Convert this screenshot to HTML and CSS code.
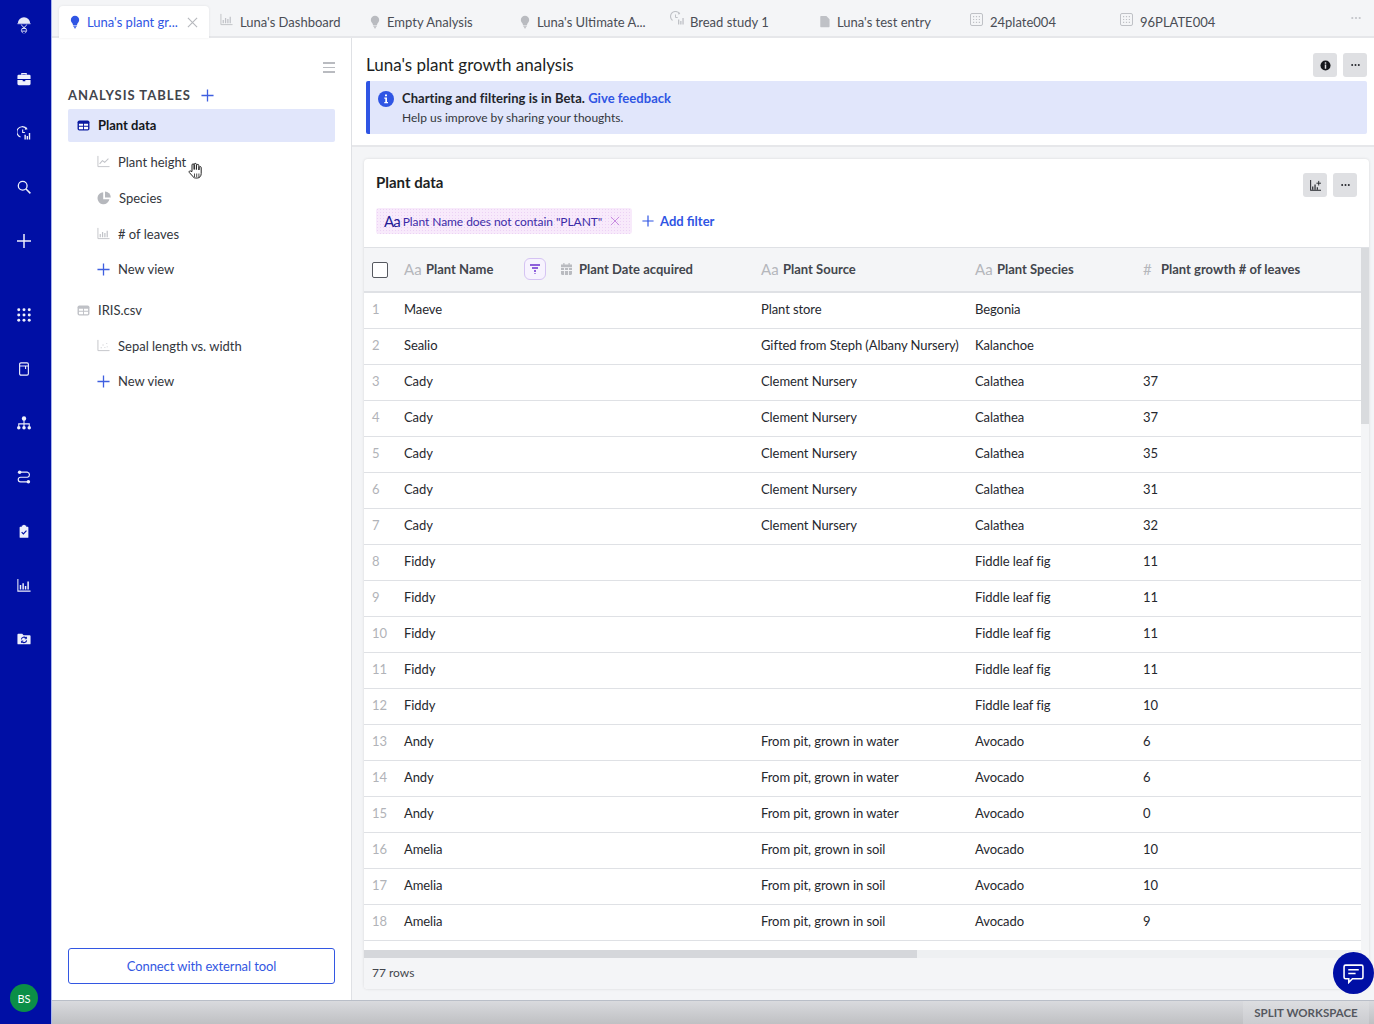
FILE: index.html
```html
<!DOCTYPE html>
<html lang="en">
<head>
<meta charset="utf-8">
<title>Luna's plant growth analysis</title>
<link rel="stylesheet" href="styles.css">
</head>
<body>
<svg class="defs" width="0" height="0" aria-hidden="true">
  <symbol id="bulb" viewBox="0 0 12 16"><path d="M6 0.500a5 5 0 0 0-5 5c0 2 1.200 3 2 4.400.4.700.5 1.300.5 1.900h5c0-.6.100-1.200.5-1.900.8-1.400 2-2.400 2-4.400a5 5 0 0 0-5-5z" fill="currentColor"/><path d="M4 12.400h4v1.200h-4zM4.800 14.400h2.400v1.200h-2.400z" fill="currentColor"/></symbol>
  <symbol id="bars" viewBox="0 0 14 14"><path d="M1 1v11.500h12.500" fill="none" stroke="currentColor" stroke-width="1"/><path d="M3.500 7.500v3.500M6 5.500v5.500M8.500 6.500v4.500M11 4v7" fill="none" stroke="currentColor" stroke-width="1.300"/></symbol>
  <symbol id="line" viewBox="0 0 14 14"><path d="M1 1v11.500h12.500" fill="none" stroke="currentColor" stroke-width="1"/><path d="M2.800 9.500l3-3.500 2.500 1.800 4-4" fill="none" stroke="currentColor" stroke-width="1.100"/></symbol>
  <symbol id="scatter" viewBox="0 0 14 14"><path d="M1 1v11.500h12.500" fill="none" stroke="currentColor" stroke-width="1"/><path d="M4 9h1v1h-1zM6 6h1v1h-1zM8 8.500h1v1h-1zM10 4.500h1v1h-1zM10.500 8h1v1h-1z" fill="currentColor"/></symbol>
  <symbol id="pie" viewBox="0 0 14 14"><path d="M6.200 1.200a6 6 0 1 0 6.200 7h-6.200z" fill="currentColor"/><path d="M8 .6v5.800h5.800A6 6 0 0 0 8 .6z" fill="currentColor"/></symbol>
  <symbol id="table" viewBox="0 0 14 12"><rect x="0.500" y="0.500" width="13" height="11" rx="2" fill="currentColor"/><path d="M2 4.200h4.500v2h-4.500zM7.500 4.200h4.500v2h-4.500zM2 7.300h4.500v2.800h-4.500zM7.500 7.300h4.500v2.800h-4.500z" fill="#fff"/></symbol>
  <symbol id="plus" viewBox="0 0 14 14"><path d="M7 .5v13M.5 7h13" fill="none" stroke="currentColor" stroke-width="1.400"/></symbol>
  <symbol id="close" viewBox="0 0 12 12"><path d="M1 1l10 10M11 1L1 11" fill="none" stroke="currentColor" stroke-width="1.200"/></symbol>
  <symbol id="dots" viewBox="0 0 10 4"><circle cx="1.300" cy="2" r="1.100" fill="currentColor"/><circle cx="5" cy="2" r="1.100" fill="currentColor"/><circle cx="8.700" cy="2" r="1.100" fill="currentColor"/></symbol>
  <symbol id="plate" viewBox="0 0 13 13"><rect x="0.500" y="0.500" width="12" height="12" rx="1.500" fill="none" stroke="currentColor"/><path d="M3 3h1.200v1.200H3zM5.900 3h1.200v1.200H5.900zM8.800 3H10v1.200H8.800zM3 5.900h1.200v1.200H3zM5.900 5.900h1.200v1.200H5.900zM8.800 5.900H10v1.200H8.800zM3 8.800h1.200V10H3zM5.900 8.800h1.200V10H5.900zM8.800 8.800H10V10H8.800z" fill="currentColor"/></symbol>
  <symbol id="doc" viewBox="0 0 11 13"><path d="M1 .5h6l3.500 3.500v8a.7.700 0 0 1-.7.700H1a.7.700 0 0 1-.7-.7V1.200A.7.700 0 0 1 1 .5z" fill="currentColor"/></symbol>
  <symbol id="study" viewBox="0 0 14 14"><path d="M9.500 2.500A5 5 0 1 0 2.500 9.500" fill="none" stroke="currentColor" stroke-width="1.100"/><path d="M5.500 3.500v3h2.200" fill="none" stroke="currentColor"/><path d="M8.800.8l1.500 2.200-2.400.6zM8 8.500h1.300v5H8zM10.200 10h1.300v3.500h-1.300zM12.400 7h1.300v6.500h-1.300z" fill="currentColor"/></symbol>
  <symbol id="cal" viewBox="0 0 12 13"><path d="M2.500 0h1.300v1.500h4.400V0h1.300v1.500H12v3H0v-3h2.500zM0 5.500h3.300v2.200H0zM4.300 5.500h3.400v2.200H4.300zM8.700 5.500H12v2.200H8.700zM0 8.700h3.300V13H1.200A1.200 1.200 0 0 1 0 11.800zM4.300 8.700h3.400V13H4.300zM8.700 8.700H12v3.100a1.200 1.200 0 0 1-1.200 1.200H8.700z" fill="currentColor"/></symbol>
</svg>

<div class="app">
  <nav class="rail">
    <div class="rail-group">
      <svg class="rail-icon logo" viewBox="0 0 16 20"><path d="M1 8a7 7 0 0 1 14 0z" fill="#e6e8f8"/><path d="M0.500 8.500h15" stroke="#e6e8f8" stroke-width="1"/><path d="M5 9.500c0 3 6 3.500 6 6.500 0 1.400-1 2.500-2 3.500M11 9.500c0 3-6 3.500-6 6.500 0 1.400 1 2.500 2 3.500M5.500 14h5M5.500 17h5" fill="none" stroke="#e6e8f8" stroke-width="1"/></svg>
      <svg class="rail-icon" viewBox="0 0 16 16"><path d="M5.500 3V1.800h5V3" fill="none" stroke="#eef0fb" stroke-width="1.400"/><path d="M.5 4.500a1.500 1.500 0 0 1 1.500-1.500h12a1.500 1.500 0 0 1 1.500 1.500V8h-15zM.5 9h6v1.500h3V9h6v4.500a1.500 1.500 0 0 1-1.500 1.500H2a1.500 1.500 0 0 1-1.500-1.500z" fill="#eef0fb"/></svg>
      <svg class="rail-icon" viewBox="0 0 16 16"><path d="M10.500 3A6 6 0 1 0 4 12.500" fill="none" stroke="#eef0fb" stroke-width="1.300"/><path d="M6.500 4v3.500h2.500" fill="none" stroke="#eef0fb" stroke-width="1.200"/><path d="M10 .6l2.200 3-3.300.7zM8.500 10h1.600v5.500H8.500zM11 11.500h1.600v4H11zM13.500 8h1.600v7.500h-1.600z" fill="#eef0fb"/></svg>
      <svg class="rail-icon" viewBox="0 0 16 16"><circle cx="6.500" cy="6.500" r="5" fill="none" stroke="#eef0fb" stroke-width="1.500"/><path d="M10.300 10.300l5 5" stroke="#eef0fb" stroke-width="1.700"/></svg>
      <svg class="rail-icon" viewBox="0 0 14 14"><path d="M7 0v14M0 7h14" stroke="#eef0fb" stroke-width="1.500"/></svg>
    </div>
    <div class="rail-group rail-tools">
      <svg class="rail-icon" viewBox="0 0 16 16"><g fill="#eef0fb"><circle cx="2" cy="2" r="1.700"/><circle cx="8" cy="2" r="1.700"/><circle cx="14" cy="2" r="1.700"/><circle cx="2" cy="8" r="1.700"/><circle cx="8" cy="8" r="1.700"/><circle cx="14" cy="8" r="1.700"/><circle cx="2" cy="14" r="1.700"/><circle cx="8" cy="14" r="1.700"/><circle cx="14" cy="14" r="1.700"/></g></svg>
      <svg class="rail-icon" viewBox="0 0 16 16"><rect x="3" y="1" width="10" height="14" rx="1.500" fill="none" stroke="#eef0fb" stroke-width="1.300"/><path d="M3 4.500h10M9.800 4.500v3.500" stroke="#eef0fb" stroke-width="1.200"/></svg>
      <svg class="rail-icon" viewBox="0 0 16 16"><g fill="#eef0fb"><circle cx="8" cy="2.800" r="2.500"/><circle cx="2" cy="13.500" r="2"/><circle cx="8" cy="13.500" r="2"/><circle cx="14" cy="13.500" r="2"/></g><path d="M8 4v9M2 12V9h12v3" fill="none" stroke="#eef0fb" stroke-width="1.200"/></svg>
      <svg class="rail-icon" viewBox="0 0 16 16"><circle cx="3" cy="2.500" r="2" fill="#eef0fb"/><circle cx="13" cy="13.500" r="2" fill="#eef0fb"/><path d="M3 2.500h9a3 3 0 0 1 0 5.800H4a2.600 2.600 0 0 0 0 5.200h9" fill="none" stroke="#eef0fb" stroke-width="1.300"/></svg>
      <svg class="rail-icon" viewBox="0 0 16 16"><path d="M5.500 1.800h1.200a1.400 1.400 0 0 1 2.600 0h1.200v1.400h1.700a.8.800 0 0 1 .8.800v11a.8.800 0 0 1-.8.800H3.800a.8.800 0 0 1-.8-.8V4a.8.800 0 0 1 .8-.8h1.700z" fill="#eef0fb"/><path d="M5.300 9.300l2 2 3.500-3.700" fill="none" stroke="#000fa5" stroke-width="1.300"/></svg>
      <svg class="rail-icon" viewBox="0 0 16 16"><path d="M1 1v14h14.500" fill="none" stroke="#eef0fb" stroke-width="1.200"/><path d="M4 8v5M7 6v7M9.800 9v4M12.700 4v9" stroke="#eef0fb" stroke-width="1.700"/></svg>
      <svg class="rail-icon" viewBox="0 0 16 16"><path d="M.5 3a1 1 0 0 1 1-1h4.500l1.500 1.800h7a1 1 0 0 1 1 1v8.200a1 1 0 0 1-1 1h-13a1 1 0 0 1-1-1z" fill="#eef0fb"/><path d="M5 8.500a3 3 0 0 1 5.300-1.500M11 9.500a3 3 0 0 1-5.300 1.500" fill="none" stroke="#000fa5" stroke-width="1.200"/><path d="M10.900 5.500v2.200H8.800M5.100 12.500v-2.200h2.100" fill="none" stroke="#000fa5" stroke-width="1"/></svg>
    </div>
    <div class="avatar">BS</div>
  </nav>

  <div class="workspace">
    <header class="tabs">
      <div class="tab tab-active"><svg class="tab-icon ic-bulb"><use href="#bulb"/></svg><span>Luna's plant gr...</span><svg class="tab-close"><use href="#close"/></svg></div>
      <div class="tab"><svg class="tab-icon ic-chart"><use href="#bars"/></svg><span>Luna's Dashboard</span></div>
      <div class="tab"><svg class="tab-icon ic-bulb"><use href="#bulb"/></svg><span>Empty Analysis</span></div>
      <div class="tab"><svg class="tab-icon ic-bulb"><use href="#bulb"/></svg><span>Luna's Ultimate A...</span></div>
      <div class="tab"><svg class="tab-icon ic-study"><use href="#study"/></svg><span>Bread study 1</span></div>
      <div class="tab"><svg class="tab-icon ic-doc"><use href="#doc"/></svg><span>Luna's test entry</span></div>
      <div class="tab"><svg class="tab-icon ic-chart"><use href="#plate"/></svg><span>24plate004</span></div>
      <div class="tab"><svg class="tab-icon ic-chart"><use href="#plate"/></svg><span>96PLATE004</span></div>
      <svg class="tabs-more"><use href="#dots"/></svg>
    </header>

    <div class="panes">
      <aside class="sidebar">
        <div class="side-top"><div class="hamburger"><i></i><i></i><i></i></div></div>
        <div class="side-title"><span>ANALYSIS TABLES</span><svg class="side-plus"><use href="#plus"/></svg></div>
        <div class="side-row side-selected"><svg class="side-table"><use href="#table"/></svg><span>Plant data</span></div>
        <div class="side-row side-sub"><svg class="side-ic"><use href="#line"/></svg><span>Plant height</span></div>
        <div class="side-row side-sub"><svg class="side-ic side-pie"><use href="#pie"/></svg><span>Species</span></div>
        <div class="side-row side-sub"><svg class="side-ic"><use href="#bars"/></svg><span># of leaves</span></div>
        <div class="side-row side-sub side-new"><svg class="side-ic"><use href="#plus"/></svg><span>New view</span></div>
        <div class="side-row side-iris"><svg class="side-table"><use href="#table"/></svg><span>IRIS.csv</span></div>
        <div class="side-row side-sub"><svg class="side-ic"><use href="#scatter"/></svg><span>Sepal length vs. width</span></div>
        <div class="side-row side-sub side-new"><svg class="side-ic"><use href="#plus"/></svg><span>New view</span></div>
        <button class="connect">Connect with external tool</button>
      </aside>

      <main class="main">
        <section class="head">
          <div class="head-title">
            <h1>Luna's plant growth analysis</h1>
            <div class="btns">
              <button class="icon-btn"><svg class="ic12" viewBox="0 0 12 12"><circle cx="6" cy="6" r="5.500" fill="#15171c"/><path d="M5.200 2.500h1.600v1.500H5.200zM5.200 5h1.600v4.500H5.200z" fill="#dfe0e3"/></svg></button>
              <button class="icon-btn"><svg class="ic-dots"><use href="#dots"/></svg></button>
            </div>
          </div>
          <div class="banner">
            <svg class="banner-ic" viewBox="0 0 16 16"><circle cx="8" cy="8" r="8" fill="#2f55e4"/><path d="M7 3.500h2v1.800H7zM6.300 6.500H9v4.500h1v1.200H6.300V11h1V7.700h-1z" fill="#fff"/></svg>
            <div class="banner-text">
              <p class="banner-main">Charting and filtering is in Beta. <a>Give feedback</a></p>
              <p class="banner-sub">Help us improve by sharing your thoughts.</p>
            </div>
          </div>
        </section>

        <section class="card">
          <div class="card-head">
            <h2>Plant data</h2>
            <div class="btns">
              <button class="icon-btn"><svg class="ic12" viewBox="0 0 12 12"><path d="M.7 0v11.300H12" fill="none" stroke="#23252b" stroke-width="1.100"/><path d="M3 7v3.500M5.500 5v5.500M8 8v2.500" stroke="#23252b" stroke-width="1.300"/><path d="M9.500 1v5M7 3.500h5" stroke="#23252b" stroke-width="1"/></svg></button>
              <button class="icon-btn"><svg class="ic-dots"><use href="#dots"/></svg></button>
            </div>
          </div>
          <div class="filters">
            <div class="chip"><span class="chip-aa">Aa</span><span>Plant Name does not contain "PLANT"</span><svg class="chip-x"><use href="#close"/></svg></div>
            <div class="add-filter"><svg class="add-ic"><use href="#plus"/></svg><span>Add filter</span></div>
          </div>
          <div class="table-area">
            <div class="table-scroll">
              <div class="grid grid-head">
                <div class="th th-check"><span class="checkbox"></span></div>
                <div class="th th-name"><span class="aa">Aa</span><b>Plant Name</b><span class="filter-btn"><svg viewBox="0 0 12 12"><path d="M1 2h10M3 5h6M5 8h2" stroke="#6d2fd0" stroke-width="1.500"/><path d="M5.500 10.500h1" stroke="#6d2fd0" stroke-width="1.200"/></svg></span></div>
                <div class="th"><svg class="cal"><use href="#cal"/></svg><b>Plant Date acquired</b></div>
                <div class="th"><span class="aa">Aa</span><b>Plant Source</b></div>
                <div class="th"><span class="aa">Aa</span><b>Plant Species</b></div>
                <div class="th"><span class="hash">#</span><b>Plant growth # of leaves</b></div>
              </div>
              <div class="grid row"><div class="n">1</div><div>Maeve</div><div></div><div>Plant store</div><div>Begonia</div><div></div></div>
              <div class="grid row"><div class="n">2</div><div>Sealio</div><div></div><div>Gifted from Steph (Albany Nursery)</div><div>Kalanchoe</div><div></div></div>
              <div class="grid row"><div class="n">3</div><div>Cady</div><div></div><div>Clement Nursery</div><div>Calathea</div><div>37</div></div>
              <div class="grid row"><div class="n">4</div><div>Cady</div><div></div><div>Clement Nursery</div><div>Calathea</div><div>37</div></div>
              <div class="grid row"><div class="n">5</div><div>Cady</div><div></div><div>Clement Nursery</div><div>Calathea</div><div>35</div></div>
              <div class="grid row"><div class="n">6</div><div>Cady</div><div></div><div>Clement Nursery</div><div>Calathea</div><div>31</div></div>
              <div class="grid row"><div class="n">7</div><div>Cady</div><div></div><div>Clement Nursery</div><div>Calathea</div><div>32</div></div>
              <div class="grid row"><div class="n">8</div><div>Fiddy</div><div></div><div></div><div>Fiddle leaf fig</div><div>11</div></div>
              <div class="grid row"><div class="n">9</div><div>Fiddy</div><div></div><div></div><div>Fiddle leaf fig</div><div>11</div></div>
              <div class="grid row"><div class="n">10</div><div>Fiddy</div><div></div><div></div><div>Fiddle leaf fig</div><div>11</div></div>
              <div class="grid row"><div class="n">11</div><div>Fiddy</div><div></div><div></div><div>Fiddle leaf fig</div><div>11</div></div>
              <div class="grid row"><div class="n">12</div><div>Fiddy</div><div></div><div></div><div>Fiddle leaf fig</div><div>10</div></div>
              <div class="grid row"><div class="n">13</div><div>Andy</div><div></div><div>From pit, grown in water</div><div>Avocado</div><div>6</div></div>
              <div class="grid row"><div class="n">14</div><div>Andy</div><div></div><div>From pit, grown in water</div><div>Avocado</div><div>6</div></div>
              <div class="grid row"><div class="n">15</div><div>Andy</div><div></div><div>From pit, grown in water</div><div>Avocado</div><div>0</div></div>
              <div class="grid row"><div class="n">16</div><div>Amelia</div><div></div><div>From pit, grown in soil</div><div>Avocado</div><div>10</div></div>
              <div class="grid row"><div class="n">17</div><div>Amelia</div><div></div><div>From pit, grown in soil</div><div>Avocado</div><div>10</div></div>
              <div class="grid row"><div class="n">18</div><div>Amelia</div><div></div><div>From pit, grown in soil</div><div>Avocado</div><div>9</div></div>
              <div class="table-rest"></div>
              <div class="hscroll"><div class="hscroll-thumb"></div></div>
            </div>
            <div class="vscroll"><div class="vscroll-thumb"></div></div>
          </div>
          <div class="card-foot">77 rows</div>
        </section>
      </main>
    </div>

    <footer class="bottom"><div class="split">SPLIT WORKSPACE</div></footer>
  </div>
</div>

<svg class="cursor" viewBox="0 0 15 18"><path d="M4 9.500V3a1.100 1.100 0 0 1 2.200 0V7.500V2.500a1.100 1.100 0 0 1 2.200 0v5l.2-4a1.100 1.100 0 0 1 2.200 0l.1 4.500.3-2.500a1 1 0 0 1 2 .2v5.800c0 2.500-1.500 4.500-3.800 4.500H7.500c-1.500 0-2.300-.8-3-2L1.300 10.500c-.8-1.200.8-2.300 1.700-1.200z" fill="#fff" stroke="#222" stroke-width="1"/><path d="M6.500 11.500v3.500M8.700 11.500v3.500M10.900 11.500v3.500" stroke="#222" stroke-width=".8"/></svg>

<button class="chat"><svg viewBox="0 0 20 20"><path d="M2.500 2h15a1.500 1.500 0 0 1 1.500 1.500v10a1.500 1.500 0 0 1-1.500 1.500H9l-3.500 3.500V15h-3A1.500 1.500 0 0 1 1 13.500v-10A1.500 1.500 0 0 1 2.500 2z" fill="none" stroke="#fff" stroke-width="1.500"/><path d="M5 6.500h10M5 10h7" stroke="#fff" stroke-width="1.500"/></svg></button>
</body>
</html>
```

FILE: styles.css
```css
* { box-sizing: border-box; }
html, body { margin: 0; height: 100%; }
body {
  font-family: Lato, "Liberation Sans", sans-serif;
  font-size: 13px;
  color: #26282e;
  overflow: hidden;
  background: #fff;
}
svg { display: block; flex: none; }
.defs { position: absolute; }
p, h1, h2 { margin: 0; font-weight: 400; }
button { font-family: inherit; }

.app { display: flex; height: 1024px; }

.rail {
  width: 52px;
  flex: none;
  background: #000fa5;
  border-right: 1px solid #a7b4ee;
  display: flex;
  flex-direction: column;
  align-items: center;
  padding-right: 3px;
}
.rail-group { display: flex; flex-direction: column; align-items: center; gap: 40px; }
.rail-group:first-child { padding-top: 17px; }
.rail-tools { margin-top: 60px; }
.rail-icon { width: 14px; height: 14px; }
.logo { height: 20px; margin-top: -2px; margin-bottom: -3px; }
.avatar {
  margin-top: auto;
  margin-bottom: 12px;
  width: 28px;
  height: 28px;
  border-radius: 50%;
  background: #0b8f47;
  color: #fff;
  font-size: 11px;
  font-weight: 400;
  display: flex;
  align-items: center;
  justify-content: center;
}

.workspace { flex: 1; min-width: 0; display: flex; flex-direction: column; }

.tabs {
  height: 38px;
  flex: none;
  background: #f4f5f7;
  border-bottom: 2px solid #e6e7ea;
  display: flex;
  padding-left: 7px;
  position: relative;
}
.tab {
  width: 150px;
  height: 38px;
  padding: 14px 0 0 11px;
  display: flex;
  align-items: flex-start;
  gap: 7px;
  color: #4a4d55;
  font-size: 13px;
  line-height: 16px;
}
.tab-active {
  margin-top: 6px;
  height: 32px;
  padding-top: 8px;
  background: #fff;
  color: #2f55e4;
  border-radius: 4px 4px 0 0;
  box-shadow: 0 0 3px rgba(0, 0, 0, .08);
}
.tab-icon { width: 10px; height: 14px; margin-top: 1px; color: #b9bbc0; }
.tab-active .tab-icon { color: #2f55e4; }
.ic-chart { width: 13px; height: 13px; margin-top: -1px; color: #bfc1c6; }
.ic-study { width: 14px; height: 14px; margin-top: -3px; color: #bfc1c6; margin-right: -1px; }
.ic-doc { width: 10px; height: 13px; margin-top: 1px; color: #bfc1c6; }
.tab-close { width: 11px; height: 11px; color: #b6b8bd; margin: 3px 0 0 2px; }
.tabs-more { position: absolute; right: 13px; top: 16px; width: 10px; height: 4px; color: #c2c4c9; }

.panes { flex: 1; min-height: 0; display: flex; }

.sidebar {
  width: 300px;
  flex: none;
  background: #fff;
  border-right: 1px solid #dfe1e5;
  padding: 0 16px 16px;
  display: flex;
  flex-direction: column;
}
.side-top { height: 44px; padding-top: 24px; display: flex; justify-content: flex-end; }
.hamburger { display: flex; flex-direction: column; gap: 3px; width: 12px; }
.hamburger i { display: block; height: 1.500px; background: #b9bbc0; }
.side-title {
  height: 27px;
  display: flex;
  align-items: center;
  gap: 10px;
  font-weight: 700;
  font-size: 13px;
  letter-spacing: .97px;
  color: #42454c;
  padding-bottom: 1px;
}
.side-plus { width: 13px; height: 13px; color: #3f5fe0; }
.side-row { display: flex; align-items: center; height: 36px; gap: 8px; color: #33363c; padding-bottom: 1px; }
.side-selected {
  height: 33px;
  background: #e1e6fb;
  border-radius: 2px;
  padding-left: 9px;
  color: #14161a;
  font-weight: 700;
  margin-bottom: 2px;
}
.side-table { width: 13px; height: 11px; color: #0a1aa0; }
.side-sub { padding-left: 29px; }
.side-ic { width: 13px; height: 13px; color: #c1c3c8; }
.side-pie { color: #b6b8bd; width: 14px; height: 14px; }
.side-new { height: 35px; }
.side-new .side-ic { color: #3f5fe0; }
.side-iris { height: 35px; padding-left: 9px; margin-top: 6px; }
.side-iris .side-table { color: #bfc1c6; }
.connect {
  margin-top: auto;
  height: 36px;
  background: #fff;
  border: 1px solid #3357e2;
  border-radius: 3px;
  color: #3357e2;
  font-size: 13px;
  letter-spacing: -.09px;
}

.main { flex: 1; min-width: 0; background: #f4f5f7; display: flex; flex-direction: column; padding-bottom: 11px; }
.head {
  height: 109px;
  flex: none;
  background: #fff;
  border-bottom: 2px solid #e6e7ea;
  padding: 15px 7px 0 14px;
}
.head-title { display: flex; justify-content: space-between; align-items: flex-start; height: 28px; }
h1 { font-size: 17px; line-height: 24px; color: #1d1f24; }
.btns { display: flex; gap: 6px; }
.icon-btn {
  width: 24px;
  height: 24px;
  padding: 0;
  border: 0;
  border-radius: 3px;
  background: #dfe0e3;
  display: flex;
  align-items: center;
  justify-content: center;
}
.ic12 { width: 11px; height: 11px; }
.ic-dots { width: 9px; height: 4px; color: #23252b; }
.banner {
  height: 53px;
  background: #e1e6fb;
  border-left: 4px solid #2f55e4;
  border-radius: 2px;
  padding: 10px 0 0 8px;
  display: flex;
  gap: 8px;
}
.banner-ic { width: 16px; height: 16px; }
.banner-text { display: flex; flex-direction: column; gap: 3px; margin-top: -1px; }
.banner-main { font-weight: 700; line-height: 17px; color: #23252b; letter-spacing: .04px; }
.banner-main a { color: #2f55e4; }
.banner-sub { font-size: 12px; line-height: 16px; color: #33363c; }

.card {
  flex: 1;
  min-height: 0;
  margin: 12px 5px 0 12px;
  background: #fff;
  border-radius: 4px;
  box-shadow: 0 0 3px rgba(0, 0, 0, .12);
  display: flex;
  flex-direction: column;
  overflow: hidden;
}
.card-head { height: 49px; padding: 13px 12px 0; display: flex; justify-content: space-between; flex: none; }
.card-head .btns { margin-top: 1px; }
h2 { font-size: 15px; font-weight: 700; line-height: 20px; color: #1d1f24; }
.filters { height: 39px; flex: none; padding-left: 12px; display: flex; align-items: flex-start; gap: 10px; }
.chip {
  width: 256px;
  height: 26px;
  padding: 0 0 0 8px;
  display: flex;
  align-items: center;
  gap: 3px;
  font-size: 12px;
  letter-spacing: -.06px;
  color: #3c2aa8;
  border-radius: 3px;
  background-color: #f8eafb;
  background-image: radial-gradient(#ecd2f5 .6px, transparent .7px);
  background-size: 3px 3px;
}
.chip-aa { font-size: 15px; letter-spacing: -1px; color: #241a96; }
.chip-x { width: 10px; height: 10px; color: #c88be0; margin-left: 5px; }
.add-filter { display: flex; align-items: center; gap: 6px; height: 26px; color: #2f55e4; font-weight: 700; padding-bottom: 1px; }
.add-ic { width: 12px; height: 12px; }

.table-area { flex: 1; min-height: 0; display: flex; border-top: 1px solid #dfe1e5; }
.table-scroll { flex: 1; min-width: 0; display: flex; flex-direction: column; }
.grid { display: grid; grid-template-columns: 40px 157px 200px 214px 168px 218px; }
.grid-head { height: 45px; background: #f4f5f7; border-bottom: 2px solid #dfe1e5; align-items: center; }
.th { display: flex; align-items: center; height: 100%; color: #43464d; padding-bottom: 2px; }
.th b { font-weight: 700; }
.th-check { padding: 0 0 0 8px; }
.th-name { position: relative; }
.checkbox { width: 16px; height: 16px; background: #fff; border: 1px solid #55585f; border-radius: 2px; }
.aa { font-size: 15px; color: #b5b7bc; width: 22px; }
.cal { width: 11px; height: 12px; color: #b9bbc0; margin-right: 7px; }
.hash { font-size: 15px; color: #b5b7bc; width: 18px; }
.filter-btn {
  position: absolute;
  left: 120px;
  top: 10px;
  width: 22px;
  height: 22px;
  padding: 4px;
  border: 1px solid #d5c3f3;
  border-radius: 6px;
  background: #f7f3fe;
}
.row { height: 36px; align-items: center; border-bottom: 1px solid #dfe1e5; color: #26282e; line-height: 18px; padding-bottom: 3px; letter-spacing: -.08px; }
.n { padding-left: 8px; color: #b1b3b8; }
.table-rest { height: 9px; }
.hscroll { height: 8px; background: #eef0f2; }
.hscroll-thumb { width: 553px; height: 100%; background: #d5d7db; }
.vscroll { width: 8px; flex: none; background: #f4f5f7; }
.vscroll-thumb { height: 176px; background: #d9dbde; }
.card-foot { height: 31px; flex: none; background: #f4f5f7; padding: 8px 8px 0; font-size: 12px; line-height: 14px; color: #43464d; }

.bottom {
  height: 24px;
  flex: none;
  border-top: 1px solid #b9bec8;
  background: linear-gradient(#d9dade, #bfc0c3);
  display: flex;
  justify-content: flex-end;
  padding-right: 5px;
}
.split {
  width: 126px;
  background: linear-gradient(#dddee1, #cbccd0);
  color: #55585f;
  font-size: 11.500px;
  font-weight: 700;
  display: flex;
  align-items: center;
  justify-content: center;
}

.cursor { position: absolute; left: 188px; top: 162px; width: 15px; height: 18px; }
.chat {
  position: absolute;
  left: 1333px;
  top: 952px;
  width: 41px;
  height: 42px;
  padding: 11px 10px;
  border: 0;
  border-radius: 50%;
  background: #000fa5;
}
```
